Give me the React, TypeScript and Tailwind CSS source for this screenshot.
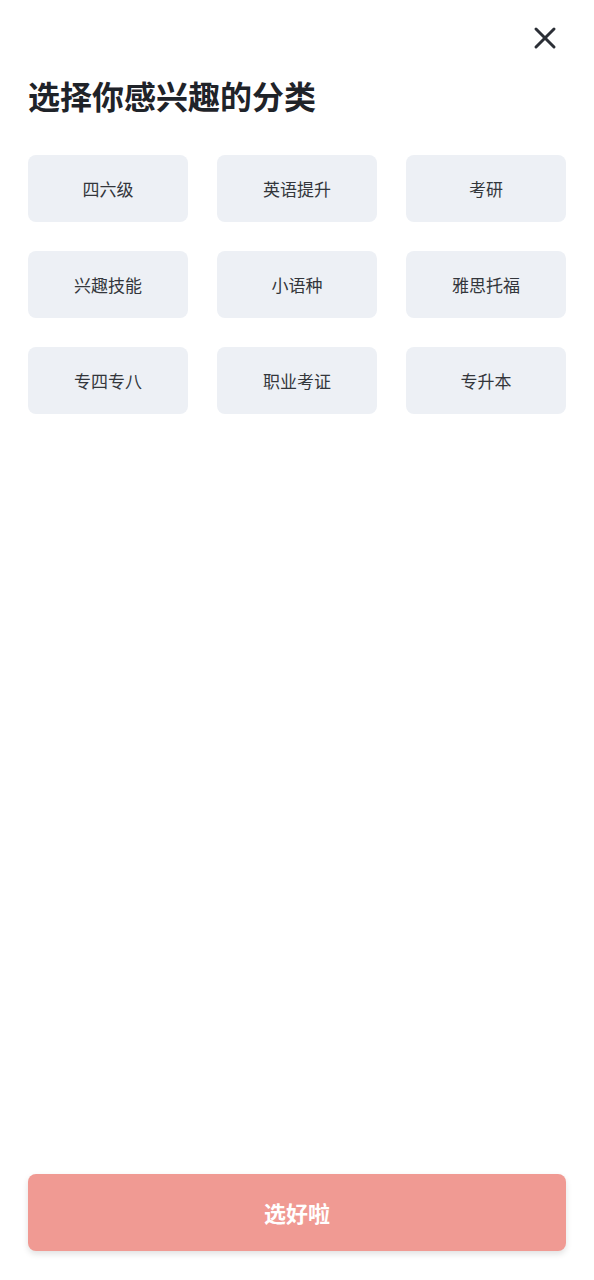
import { X } from "lucide-react";

const categories = [
  "四六级",
  "英语提升",
  "考研",
  "兴趣技能",
  "小语种",
  "雅思托福",
  "专四专八",
  "职业考证",
  "专升本",
];

export default function App() {
  return (
    <div
      className="flex flex-col h-[1280px] bg-white px-[28px]"
      style={{ fontFamily: '"Noto Sans CJK SC", "Noto Sans", sans-serif' }}
    >
      {/* Close */}
      <div className="flex justify-end pt-[20px] mr-[3px]">
        <button className="w-[36px] h-[36px] flex items-center justify-center text-[#2b2f36]">
          <X size={36} strokeWidth={2} />
        </button>
      </div>

      {/* Title */}
      <h1 className="mt-[17px] text-[32px] leading-[44px] font-bold text-[#1f2329]">
        选择你感兴趣的分类
      </h1>

      {/* Categories */}
      <div className="mt-[38px] grid grid-cols-3 gap-x-[29px] gap-y-[29px]">
        {categories.map((c) => (
          <button
            key={c}
            className="h-[67px] rounded-[8px] bg-[#edf0f5] text-[17px] font-normal text-[#33363b] flex items-center justify-center"
          >
            {c}
          </button>
        ))}
      </div>

      <div className="flex-grow" />

      {/* Confirm */}
      <button className="mb-[29px] h-[77px] rounded-[8px] bg-[#f09a93] text-white text-[22px] font-bold shadow-[0_3px_6px_rgba(0,0,0,0.12)]">
        选好啦
      </button>
    </div>
  );
}
